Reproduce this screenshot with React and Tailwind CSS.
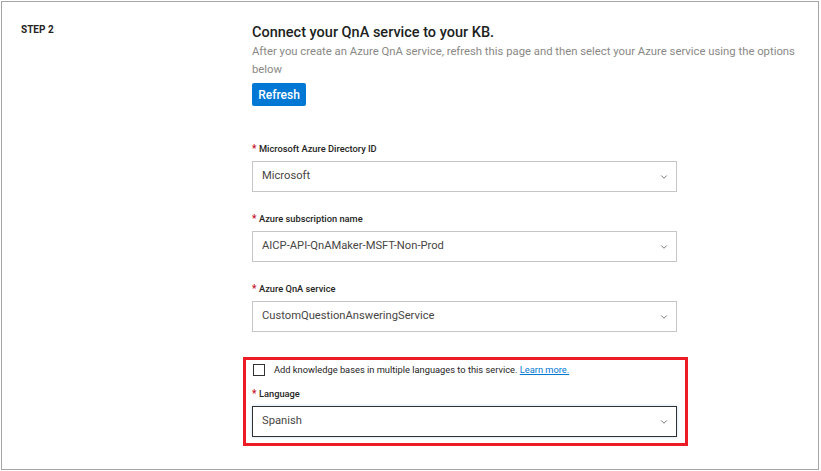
import { ChevronDown } from "lucide-react";

const font = { fontFamily: 'Roboto, "Noto Sans", sans-serif' };

const SelectField = ({ label, value, active }) => (
  <div className="flex flex-col">
    <label className="text-[9.3px] font-medium text-[#252423] leading-[14px]">
      <span className="text-[#c50f1f] text-[10px]">* </span>
      {label}
    </label>
    <div
      className={`mt-[5px] w-[425px] h-[31px] flex items-center justify-between pl-[9px] pr-[7px] bg-white border ${
        active ? "border-[#323130] shadow-[0_0_3px_rgba(0,120,212,0.25)]" : "border-[#c8c6c4]"
      }`}
    >
      <span className="text-[11.2px] text-[#484644]">{value}</span>
      <ChevronDown className="w-[10px] h-[10px] text-[#605e5c]" strokeWidth={2} />
    </div>
  </div>
);

export default function App() {
  return (
    <div className="w-[821px] h-[471px] bg-white pl-px pt-px" style={font}>
      <div className="w-[818px] h-[469px] border border-[#a6a6a6] flex">
        <div className="w-[250px] pl-[19px] pt-[22px] shrink-0">
          <div className="text-[10px] font-bold text-[#252423] leading-[12px]">STEP 2</div>
        </div>
        <div className="flex flex-col pt-[20px] w-[552px]">
          <h2 className="text-[14.5px] font-medium text-[#201f1e] leading-[22px]">
            Connect your QnA service to your KB.
          </h2>
          <p className="text-[11.3px] text-[#8a8886] leading-[18px] mt-[-1px]">
            After you create an Azure QnA service, refresh this page and then select your Azure service using the options below
          </p>
          <button className="mt-[4px] w-[54px] h-[23px] bg-[#0078d4] text-white text-[12px] font-medium rounded-[2px] flex items-center justify-center">
            Refresh
          </button>

          <div className="mt-[36px] flex flex-col gap-[20px]">
            <SelectField label="Microsoft Azure Directory ID" value="Microsoft" />
            <SelectField label="Azure subscription name" value="AICP-API-QnAMaker-MSFT-Non-Prod" />
            <SelectField label="Azure QnA service" value="CustomQuestionAnsweringService" />
          </div>

          <div className="mt-[25px] ml-[-9px] w-[445px] border-[3px] border-[#ed1c24] pl-[6px] pr-[7px] pt-[4px] pb-[6px]">
            <div className="flex items-center h-[12px]">
              <span className="w-[12px] h-[12px] border border-[#323130] bg-white shrink-0 ml-px" />
              <span className="ml-[9px] text-[9.3px] text-[#252423] leading-[12px]">
                Add knowledge bases in multiple languages to this service.{" "}
                <a className="text-[#0078d4] underline" href="#">Learn more.</a>
              </span>
            </div>
            <div className="mt-[11px]">
              <SelectField label="Language" value="Spanish" active />
            </div>
          </div>
        </div>
      </div>
    </div>
  );
}
